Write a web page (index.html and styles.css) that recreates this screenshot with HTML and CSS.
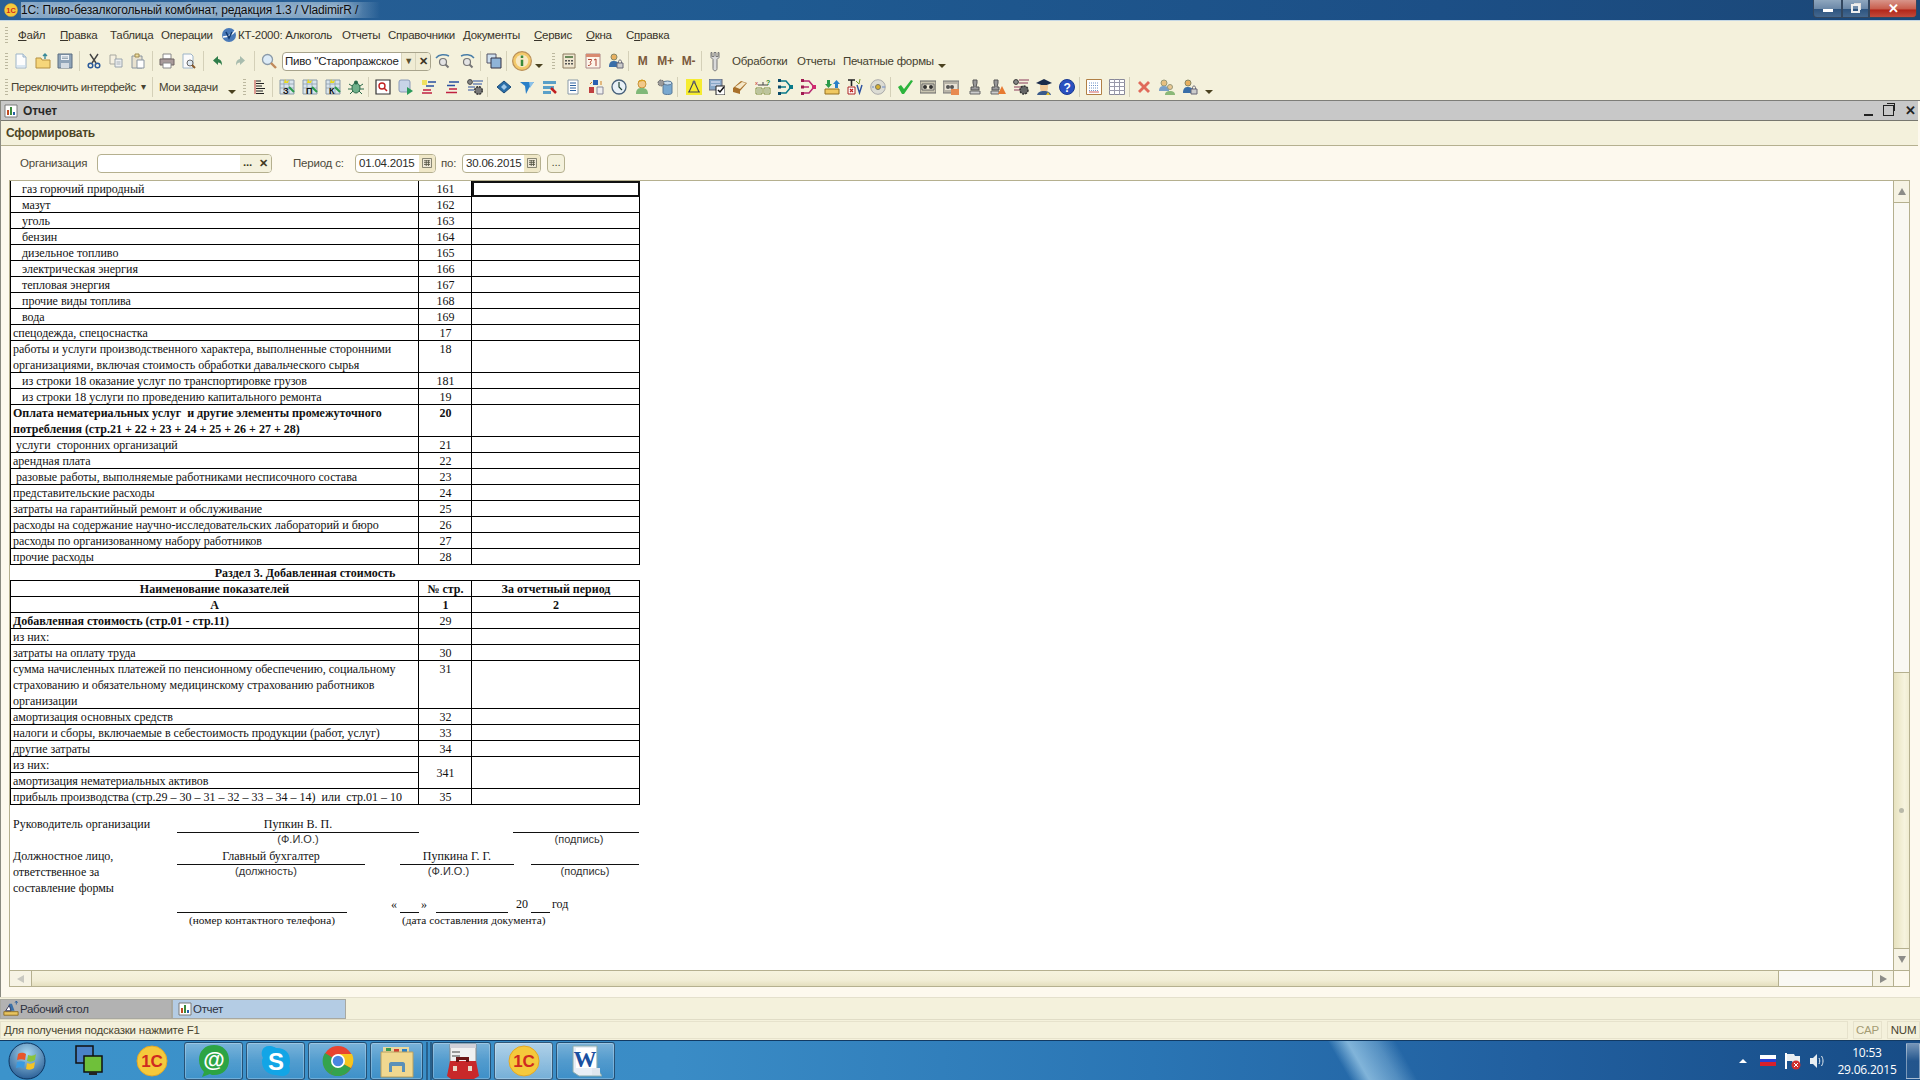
FILE: index.html
```html
<!DOCTYPE html>
<html lang="ru">
<head>
<meta charset="utf-8">
<title>1С</title>
<link rel="stylesheet" href="styles.css">
</head>
<body>
<svg class="defs" xmlns="http://www.w3.org/2000/svg">
<defs>
<symbol id="new" viewBox="0 0 16 16"><path d="M3 1h7l3 3v11H3z" fill="#fdfdfd" stroke="#9db4c8"/><path d="M10 1v3h3" fill="#d6e4ef" stroke="#9db4c8"/><path d="M4 12h8v2H4z" fill="#dbe8f2"/></symbol>
<symbol id="open" viewBox="0 0 16 16"><path d="M1 5h5l1 2h8v8H1z" fill="#f6d67a" stroke="#b59040"/><path d="M10 6V1M8 3l2-2 2 2" fill="none" stroke="#3a8a9a" stroke-width="1.4"/></symbol>
<symbol id="save" viewBox="0 0 16 16"><path d="M1 1h14v14H1z" fill="#8fa4b8" stroke="#5c6f82"/><path d="M4 2h8v5H4z" fill="#eef2f5"/><path d="M4 10h8v5H4z" fill="#d3dbe2"/><path d="M5 4h6M5 5.5h6" stroke="#9aa9b6"/></symbol>
<symbol id="cut" viewBox="0 0 16 16"><path d="M4 1l6 9M12 1L6 10" stroke="#444" stroke-width="1.4"/><circle cx="4.5" cy="12.5" r="2.3" fill="none" stroke="#2a5a9a" stroke-width="1.5"/><circle cx="11.5" cy="12.5" r="2.3" fill="none" stroke="#2a5a9a" stroke-width="1.5"/></symbol>
<symbol id="copy" viewBox="0 0 16 16"><path d="M2 2h6v9H2z" fill="#f5f0e0" stroke="#a8a8a0"/><path d="M7 6h7v8H7z" fill="#eef0f0" stroke="#9aa4ac"/><path d="M8.5 9h4M8.5 11h4" stroke="#a8b0b8"/></symbol>
<symbol id="paste" viewBox="0 0 16 16"><path d="M2 3h10v12H2z" fill="#e8e2d0" stroke="#8a95a0"/><path d="M5 1h4v3H5z" fill="#f0e0a0" stroke="#a08a50"/><path d="M7 7h7v8H7z" fill="#fff" stroke="#8a95a0"/></symbol>
<symbol id="print" viewBox="0 0 16 16"><path d="M4 1h8v5H4z" fill="#fff" stroke="#888"/><path d="M1 6h14v6H1z" fill="#a89a9a" stroke="#6e6464"/><path d="M4 10h8v5H4z" fill="#fff" stroke="#888"/></symbol>
<symbol id="prev" viewBox="0 0 16 16"><path d="M2 1h8l2 2v12H2z" fill="#fbfbfb" stroke="#9db4c8"/><circle cx="9" cy="10" r="3" fill="#dfeaf3" stroke="#666"/><path d="M11 12l3 3" stroke="#8a5a2a" stroke-width="2"/></symbol>
<symbol id="undo" viewBox="0 0 16 16"><path d="M8 3L3 7.5 8 12V9.5c2 0 3 1 4 3 0-4-1-6-4-6.500z" fill="#2f7d4a"/></symbol>
<symbol id="redo" viewBox="0 0 16 16"><path d="M8 3l5 4.500L8 12V9.500c-2 0-3 1-4 3 0-4 1-6 4-6.500z" fill="#a8bcae"/></symbol>
<symbol id="find" viewBox="0 0 16 16"><circle cx="6.500" cy="6.500" r="5" fill="#dcebf7" stroke="#8a9aa8" stroke-width="1.300"/><path d="M10 10l5 5" stroke="#c08a5a" stroke-width="2.400"/></symbol>
<symbol id="lens1" viewBox="0 0 16 16"><path d="M1 5c3-4 9-4 13-2" fill="none" stroke="#4a7ea8" stroke-width="1.400"/><circle cx="8" cy="9" r="3.500" fill="#e4e4e4" stroke="#777" stroke-width="1.200"/><path d="M10.500 11.500l3 3" stroke="#777" stroke-width="2"/></symbol>
<symbol id="lens2" viewBox="0 0 16 16"><path d="M15 5C12 1 6 1 2 3" fill="none" stroke="#4a7ea8" stroke-width="1.400"/><circle cx="8" cy="9" r="3.500" fill="#e4e4e4" stroke="#777" stroke-width="1.200"/><path d="M10.500 11.500l3 3" stroke="#777" stroke-width="2"/></symbol>
<symbol id="wins" viewBox="0 0 16 16"><path d="M1 1h9v9H1z" fill="#cfe0ef" stroke="#556"/><path d="M5 5h10v10H5z" fill="#8fb4d8" stroke="#334"/></symbol>
<symbol id="info" viewBox="0 0 16 16"><circle cx="8" cy="8" r="7.500" fill="#f3c96a" stroke="#b9905a"/><circle cx="8" cy="8" r="5" fill="#f8e9c4"/><path d="M7 7h2v5H7zM7 3.500h2v2H7z" fill="#3a8a3a"/></symbol>
<symbol id="calc" viewBox="0 0 16 16"><path d="M2 1h12v14H2z" fill="#efe6d0" stroke="#8a7a60"/><path d="M4 3h8v2H4z" fill="#6a8a5a"/><path d="M4 7h2v1.500H4zM7 7h2v1.500H7zM10 7h2v1.500h-2zM4 10h2v1.500H4zM7 10h2v1.500H7zM10 10h2v1.500h-2z" fill="#555"/></symbol>
<symbol id="cal" viewBox="0 0 16 16"><path d="M1 1h14v14H1z" fill="#fdf5ea" stroke="#a88"/><path d="M1 1h14v3H1z" fill="#d88a70"/><path d="M3 6.500h3.500v1L5 9.500c1.500 0 1.500 3-2 3M9 7l2-1v7" fill="none" stroke="#b04030"/></symbol>
<symbol id="ulock" viewBox="0 0 16 16"><circle cx="6" cy="4" r="3" fill="#e8b060" stroke="#886"/><path d="M1 14c0-5 2-6 5-6s4 1 4 2v4z" fill="#3a6ea8"/><path d="M9 10h6v5H9z" fill="#ccc" stroke="#667"/><path d="M10.500 10V8.500c0-2 3-2 3 0V10" fill="none" stroke="#667"/></symbol>
<symbol id="wrench" viewBox="0 0 16 20"><path d="M4 1v5l2 2v9c0 3 4 3 4 0V8l2-2V1l-1 0v4H9V1H7v4H5V1z" fill="#dadada" stroke="#777"/></symbol>
<symbol id="list" viewBox="0 0 16 16"><path d="M3 1v14" stroke="#c04040"/><path d="M4 2h5M4 4.500h8M4 7h6M4 9.500h9M4 12h7M4 14.500h8" stroke="#222" stroke-width="1.200"/></symbol>
<symbol id="g3" viewBox="0 0 16 16"><path d="M1 1h14v14H1z" fill="#d8e4ec" stroke="#8a9aa8"/><path d="M1 5h14M1 9h14M5 1v14M10 1v14" stroke="#8a9aa8" stroke-width=".7"/><path d="M6 0l1.500 2.500L10 1 9 4H5z" fill="#e8d820"/><path d="M10 8l5 5" stroke="#2a9a4a" stroke-width="2"/><text x="4" y="15" font-size="9" font-weight="700" font-family="Liberation Sans" fill="#111">З</text></symbol>
<symbol id="gp" viewBox="0 0 16 16"><path d="M1 1h14v14H1z" fill="#d8e4ec" stroke="#8a9aa8"/><path d="M1 5h14M1 9h14M5 1v14M10 1v14" stroke="#8a9aa8" stroke-width=".7"/><path d="M6 0l1.500 2.500L10 1 9 4H5z" fill="#e8d820"/><path d="M10 8l5 5" stroke="#2a9a4a" stroke-width="2"/><text x="4" y="15" font-size="9" font-weight="700" font-family="Liberation Sans" fill="#111">П</text></symbol>
<symbol id="gk" viewBox="0 0 16 16"><path d="M1 1h14v14H1z" fill="#d8e4ec" stroke="#8a9aa8"/><path d="M1 5h14M1 9h14M5 1v14M10 1v14" stroke="#8a9aa8" stroke-width=".7"/><path d="M6 0l1.500 2.500L10 1 9 4H5z" fill="#e8d820"/><path d="M10 8l5 5" stroke="#2a9a4a" stroke-width="2"/><text x="4" y="15" font-size="9" font-weight="700" font-family="Liberation Sans" fill="#111">К</text></symbol>
<symbol id="bug" viewBox="0 0 16 16"><ellipse cx="8" cy="9" rx="4" ry="5" fill="#6fb08a" stroke="#2a6a4a"/><circle cx="8" cy="3.500" r="2" fill="#2a6a4a"/><path d="M1 5l3 2M15 5l-3 2M0 10h4M16 10h-4M2 15l3-3M14 15l-3-3" stroke="#2a6a4a"/></symbol>
<symbol id="qbox" viewBox="0 0 16 16"><path d="M1 1h14v14H1z" fill="#fff" stroke="#333" stroke-width="1.200"/><circle cx="7" cy="7" r="3" fill="#fff" stroke="#c02020" stroke-width="1.400"/><path d="M9 9l3 3" stroke="#c02020" stroke-width="1.600"/></symbol>
<symbol id="play" viewBox="0 0 16 16"><rect x="1" y="1" width="11" height="12" rx="2" fill="#c8d4e8" stroke="#8a9ab8"/><path d="M9 8l6 4-6 4z" fill="#2a9a5a"/></symbol>
<symbol id="lines1" viewBox="0 0 16 16"><path d="M1 1h5v5H1z" fill="#f0e060"/><path d="M7 3h8M5 7h8" stroke="#2a50a0" stroke-width="1.300"/><path d="M2 11h8M1 14h10" stroke="#c02040" stroke-width="1.300"/></symbol>
<symbol id="lines2" viewBox="0 0 16 16"><path d="M5 3h10M3 6.500h8" stroke="#2a50a0" stroke-width="1.300"/><path d="M5 10h8M2 13.500h11" stroke="#c02040" stroke-width="1.300"/></symbol>
<symbol id="gearl" viewBox="0 0 16 16"><circle cx="3" cy="3" r="2.400" fill="#888" stroke="#444"/><path d="M6 2h10M6 5h9M1 8h7M1 11h6" stroke="#2a50a0" stroke-width="1.100"/><circle cx="11.500" cy="11.500" r="3.800" fill="#777" stroke="#333" stroke-width="1.400" stroke-dasharray="2 1"/></symbol>
<symbol id="diam" viewBox="0 0 16 16"><path d="M8 2l7 6-7 6-7-6z" fill="#2a6ea8" stroke="#1a4a78"/><path d="M8 5l3 3-3 3-3-3z" fill="#a0c8e8"/></symbol>
<symbol id="tag" viewBox="0 0 16 16"><path d="M1 3h14l-5 6-3 6-1-8z" fill="#2a80c8"/><path d="M10 3h5l-4 6z" fill="#8ac0e8"/></symbol>
<symbol id="pen" viewBox="0 0 16 16"><path d="M1 2h13v3H1zM1 7h11v3H1zM1 12h8v3H1z" fill="#5aa0c8"/><path d="M9 9l5 5" stroke="#c02020" stroke-width="2.500"/></symbol>
<symbol id="doc" viewBox="0 0 16 16"><path d="M3 1h10v14H3z" fill="#fff" stroke="#8a9aa8"/><path d="M5 4h6M5 6.500h6M5 9h6M5 11.500h6" stroke="#2a60a0"/></symbol>
<symbol id="org" viewBox="0 0 16 16"><path d="M5 1h5v5H5z" fill="#2a60b0"/><path d="M1 8h5v6H1z" fill="#c04040"/><path d="M9 8h6v7H9z" fill="#eee" stroke="#889"/><path d="M2 5l2-2M13 2v4" stroke="#d08020"/></symbol>
<symbol id="clock" viewBox="0 0 16 16"><circle cx="8" cy="8" r="7" fill="#e8f0f6" stroke="#47607a" stroke-width="1.300"/><path d="M8 3v5l3 3" fill="none" stroke="#243" stroke-width="1.200"/></symbol>
<symbol id="pers" viewBox="0 0 16 16"><circle cx="8" cy="5" r="4" fill="#f2c88a" stroke="#c8943a"/><path d="M4 3c1-3 7-3 8 0L9 2z" fill="#d8a020"/><path d="M2 15c0-5 2-6 6-6s6 2 6 6z" fill="#80b878"/></symbol>
<symbol id="db" viewBox="0 0 16 16"><path d="M6 4v10c0 2 9 2 9 0V4z" fill="#78a8d0" stroke="#5a7a98"/><ellipse cx="10.500" cy="4" rx="4.500" ry="2" fill="#c8dcec" stroke="#5a7a98"/><circle cx="4" cy="4" r="3" fill="#999" stroke="#666" stroke-dasharray="2 1"/></symbol>
<symbol id="comp" viewBox="0 0 16 16"><path d="M0 0h16v16H0z" fill="#f6ec30"/><path d="M8 2L3 13M8 2l5 11M2 13h12" fill="none" stroke="#445" stroke-width="1.100"/><circle cx="8" cy="3" r="1.500" fill="#667"/></symbol>
<symbol id="fchk" viewBox="0 0 16 16"><path d="M0 0h13v11H0z" fill="#88a8c8" stroke="#667"/><path d="M2 3h9M2 6h9" stroke="#eef"/><path d="M7 7h9v9H7z" fill="#fff" stroke="#222"/><path d="M9 11l2 2 4-5" fill="none" stroke="#111" stroke-width="1.500"/></symbol>
<symbol id="book" viewBox="0 0 16 16"><path d="M1 9l8-7 6 2-7 8v3L1 13z" fill="#a8702a"/><path d="M3 8l7-5 4 1-6 6z" fill="#f4e8c8"/></symbol>
<symbol id="tree" viewBox="0 0 16 16"><path d="M3 6h10M8 3v3" stroke="#444"/><path d="M1 9h6v6H1zM9 9h6v6H9z" fill="#fff" stroke="#7a8a3a"/><path d="M2 11h4M2 13h4M10 11h4M10 13h4" stroke="#7a8a3a"/><text x="0" y="6" font-size="6" font-family="Liberation Sans" fill="#c02020">x</text><text x="11" y="6" font-size="7" font-weight="700" font-family="Liberation Sans" fill="#2a8a2a">?</text></symbol>
<symbol id="flowt" viewBox="0 0 16 16"><path d="M1 2h7l5 6-5 6H1" fill="none" stroke="#087a8a" stroke-width="1.500"/><path d="M1 8h7" stroke="#087a8a" stroke-width="1.500"/><path d="M11 6h4v4h-4z" fill="#087a8a"/><path d="M0 0h3v3H0zM0 6.500h3v3H0zM0 13h3v3H0z" fill="#0a4a6a"/></symbol>
<symbol id="flowp" viewBox="0 0 16 16"><path d="M1 2h7l5 6-5 6H1" fill="none" stroke="#b82a70" stroke-width="1.500"/><path d="M1 8h7" stroke="#b82a70" stroke-width="1.500"/><path d="M11 6h4v4h-4z" fill="#d02a70"/><path d="M0 0h3v3H0zM0 6.500h3v3H0zM0 13h3v3H0z" fill="#a01a50"/></symbol>
<symbol id="dl" viewBox="0 0 16 16"><path d="M1 10h14v5H1z" fill="#f0c860" stroke="#947020"/><path d="M3 1h3v4h2L4.500 9 1 5h2z" fill="#2a9a4a"/><path d="M11 9V5H9l3.500-4L16 5h-2v4z" fill="#2a80c8"/></symbol>
<symbol id="txv" viewBox="0 0 16 16"><path d="M1 1h7M4.500 1v6" stroke="#222" stroke-width="1.600"/><path d="M1 8h7v7H1z" fill="#fff" stroke="#a22"/><path d="M3 10l3 3M6 10l-3 3" stroke="#c02020" stroke-width="1.200"/><path d="M10 6l2.500 8L15 6" fill="none" stroke="#2a50a0" stroke-width="1.400"/><path d="M9 2l3 3 1-5" fill="none" stroke="#7a9a2a"/></symbol>
<symbol id="disk" viewBox="0 0 16 16"><circle cx="8" cy="8" r="7.300" fill="#dcdcd4" stroke="#aaa"/><circle cx="8" cy="8" r="2.500" fill="#d8b030" stroke="#776"/><path d="M2 8h2M12 8h3" stroke="#6a8ac8"/></symbol>
<symbol id="chk" viewBox="0 0 16 16"><path d="M1 8l3-2 3 4 7-9 2 1-9 13h-2z" fill="#2cb43c"/></symbol>
<symbol id="tape" viewBox="0 0 16 16"><path d="M0 2h16v12H0z" fill="#c8c4b0" stroke="#666"/><path d="M2 5h12v6H2z" fill="#efe9d6" stroke="#666"/><circle cx="5" cy="8" r="2" fill="#333"/><circle cx="11" cy="8" r="2" fill="#333"/></symbol>
<symbol id="tape2" viewBox="0 0 16 16"><path d="M0 2h16v12H0z" fill="#b8b4a8" stroke="#777"/><path d="M2 5h12v6H2z" fill="#e8e2d6"/><circle cx="5" cy="8" r="2" fill="#555"/><circle cx="9" cy="8" r="2" fill="#555"/><path d="M8 10h8v6H8z" fill="#e88a50"/></symbol>
<symbol id="stamp" viewBox="0 0 16 16"><path d="M6 1h4v3L9 8h3v3H4V8h3L6 4z" fill="#9a9a9a" stroke="#555"/><path d="M3 12h10v3H3z" fill="#ccc" stroke="#666"/></symbol>
<symbol id="stamp2" viewBox="0 0 16 16"><path d="M4 1h4v3L7 8h2v3H2V8h3L4 4z" fill="#9a9a9a" stroke="#555"/><path d="M1 12h8v3H1z" fill="#ccc" stroke="#666"/><path d="M12 7l4 8H8z" fill="#e87a30"/></symbol>
<symbol id="gears" viewBox="0 0 16 16"><circle cx="3" cy="3" r="2.400" fill="#888" stroke="#333"/><path d="M6 1h10M6 4h9M1 8h8M1 11h6" stroke="#8a3a5a" stroke-width="1.100"/><circle cx="11" cy="11" r="4" fill="#666" stroke="#333" stroke-width="1.500" stroke-dasharray="2 1"/></symbol>
<symbol id="schol" viewBox="0 0 16 16"><path d="M0 4l8-4 8 4-8 3z" fill="#1a2a4a"/><path d="M4 6h8v3c0 3-2 4-4 4s-4-1-4-4z" fill="#f0c898"/><path d="M1 16c1-3 3-4 7-4s6 1 7 4z" fill="#3a5a8a"/><path d="M12 13l2 3h-4z" fill="#e8c020"/></symbol>
<symbol id="help" viewBox="0 0 16 16"><circle cx="8" cy="8" r="7.500" fill="#2a50c0" stroke="#1a3a90"/><text x="8" y="12.500" text-anchor="middle" font-size="12" font-weight="700" font-family="Liberation Sans" fill="#fff">?</text></symbol>
<symbol id="grid" viewBox="0 0 16 16"><path d="M.5.500h15v15H.5z" fill="#fff" stroke="#b07f45"/><path d="M3 4h10M3 6.500h10M3 9h10M3 11.500h10" stroke="#6f94c8" stroke-dasharray="1 1"/><path d="M3 13h10" stroke="#d06060"/></symbol>
<symbol id="table" viewBox="0 0 16 16"><path d="M.5.500h15v15H.5z" fill="#fff" stroke="#889"/><path d="M0 3.500h16M0 7.500h16M0 11.500h16M5.500 0v16M10.500 0v16" stroke="#99a"/></symbol>
<symbol id="redx" viewBox="0 0 16 16"><path d="M2 4l2-2 4 4 4-4 2 2-4 4 4 4-2 2-4-4-4 4-2-2 4-4z" fill="#e06a5a"/></symbol>
<symbol id="users" viewBox="0 0 16 16"><circle cx="5" cy="4" r="3" fill="#e8c080" stroke="#997"/><path d="M0 12c0-4 2-5 5-5s4 1 5 3v2z" fill="#7aa0c8"/><circle cx="11" cy="8" r="2.500" fill="#eac894" stroke="#997"/><path d="M6 16c0-3 2-4 5-4s5 1 5 4z" fill="#8ab878"/></symbol>
<symbol id="ucal" viewBox="0 0 16 16"><path d="M2 2h12v12H2z" fill="#eee8d8" stroke="#665"/><path d="M4 5h8M4 7.500h8M4 10h8M7 4v8M10 4v8" stroke="#554" stroke-width="1.100"/></symbol>
<symbol id="rep" viewBox="0 0 14 14"><path d="M1 1h12v12H1z" fill="#fff" stroke="#7a7a7a"/><path d="M3 6h2v5H3z" fill="#c04a20"/><path d="M6 3h2v8H6z" fill="#3a8a3a"/><path d="M9 8h2v3H9z" fill="#2a60a8"/></symbol>
<symbol id="desk" viewBox="0 0 18 18"><path d="M1 12h16v4H1z" fill="#e8c460" stroke="#8a6a20"/><path d="M4 11l3-8h3l3 8z" fill="#3a70a8"/><path d="M7 5l-4 6h6z" fill="#fff" stroke="#335"/><path d="M15 0v4M13.500 2l1.500-2 1.500 2" fill="none" stroke="#2a60a0"/></symbol>
<symbol id="ks" viewBox="0 0 16 16"><circle cx="8" cy="8" r="7" fill="#4a7ab8"/><path d="M2 10c4 0 9-2 13-7" stroke="#fff" stroke-width="1.500" fill="none"/><path d="M5 5l3 6 3-6" fill="none" stroke="#123a70" stroke-width="1.600"/></symbol>
<symbol id="oneC" viewBox="0 0 32 32"><circle cx="16" cy="16" r="15" fill="#f5c93c" stroke="#e3a725"/><text x="16" y="22" text-anchor="middle" font-size="17" font-weight="700" font-family="Liberation Sans" fill="#cf2a20">1С</text></symbol>
</defs>
</svg>

<header class="title">
  <svg class="ico14"><use href="#oneC"/></svg>
  <span class="title-text">1С: Пиво-безалкогольный комбинат, редакция 1.3 / VladimirR /</span>
  <div class="winbtns">
    <span class="wb wb-min"><i></i></span>
    <span class="wb wb-max"><i></i></span>
    <span class="wb wb-close">✕</span>
  </div>
</header>

<nav class="menu">
  <span class="grip"></span>
  <span class="mi w42"><u>Ф</u>айл</span>
  <span class="mi w50"><u>П</u>равка</span>
  <span class="mi w51">Таблица</span>
  <span class="mi w60">Операции</span>
  <svg class="ico16 mi-ic"><use href="#ks"/></svg>
  <span class="mi w104">КТ-2000: Алкоголь</span>
  <span class="mi w46">Отчеты</span>
  <span class="mi w75">Справочники</span>
  <span class="mi w71">Документы</span>
  <span class="mi w52"><u>С</u>ервис</span>
  <span class="mi w40"><u>О</u>кна</span>
  <span class="mi">С<u>п</u>равка</span>
</nav>

<div class="tb tb1">
  <span class="grip"></span>
  <span class="ic"><svg class="ico16"><use href="#new"/></svg></span>
  <span class="ic"><svg class="ico16"><use href="#open"/></svg></span>
  <span class="ic"><svg class="ico16"><use href="#save"/></svg></span>
  <span class="sp7"></span>
  <span class="ic"><svg class="ico16"><use href="#cut"/></svg></span>
  <span class="ic"><svg class="ico16"><use href="#copy"/></svg></span>
  <span class="ic"><svg class="ico16"><use href="#paste"/></svg></span>
  <span class="sp7"></span>
  <span class="ic"><svg class="ico16"><use href="#print"/></svg></span>
  <span class="ic"><svg class="ico16"><use href="#prev"/></svg></span>
  <span class="sp7"></span>
  <span class="ic"><svg class="ico16"><use href="#undo"/></svg></span>
  <span class="ic"><svg class="ico16"><use href="#redo"/></svg></span>
  <span class="sp7"></span>
  <span class="ic"><svg class="ico16"><use href="#find"/></svg></span>
  <span class="combo"><span class="combo-v">Пиво "Старопражское</span><span class="combo-dd">▼</span><span class="combo-x">✕</span></span>
  <span class="ic ic24"><svg class="ico16"><use href="#lens1"/></svg></span>
  <span class="ic ic24"><svg class="ico16"><use href="#lens2"/></svg></span>
  <span class="sp4"></span>
  <span class="ic"><svg class="ico16"><use href="#wins"/></svg></span>
  <span class="sp4"></span>
  <span class="ic ic26"><svg class="ico18"><use href="#info"/></svg></span>
  <span class="drop drop-i"></span>
  <span class="grip grip2"></span>
  <span class="ic ic24"><svg class="ico16"><use href="#calc"/></svg></span>
  <span class="ic ic24"><svg class="ico16"><use href="#cal"/></svg></span>
  <span class="ic"><svg class="ico16"><use href="#ulock"/></svg></span>
  <span class="sp4"></span>
  <span class="mbtn">M</span><span class="mbtn">M+</span><span class="mbtn">M-</span>
  <span class="sp4"></span>
  <span class="ic"><svg class="ico16 tall"><use href="#wrench"/></svg></span>
  <span class="tt t1">Обработки</span>
  <span class="tt t2">Отчеты</span>
  <span class="tt t3">Печатные формы</span>
  <span class="drop drop-p"></span>
</div>

<div class="tb tb2">
  <span class="grip"></span>
  <span class="tt2 w125">Переключить интерфейс</span>
  <span class="dd">▾</span>
  <span class="sp4"></span>
  <span class="tt2 m2 w62">Мои задачи</span>
  <span class="drop drop2"></span>
  <span class="grip grip3"></span>
  <span class="ic ic-list"><svg class="ico16"><use href="#list"/></svg></span>
  <span class="sp4"></span>
  <span class="ic"><svg class="ico16"><use href="#g3"/></svg></span>
  <span class="ic"><svg class="ico16"><use href="#gp"/></svg></span>
  <span class="ic"><svg class="ico16"><use href="#gk"/></svg></span>
  <span class="ic"><svg class="ico16"><use href="#bug"/></svg></span>
  <span class="sp4"></span>
  <span class="ic"><svg class="ico16"><use href="#qbox"/></svg></span>
  <span class="ic"><svg class="ico16"><use href="#play"/></svg></span>
  <span class="ic"><svg class="ico16"><use href="#lines1"/></svg></span>
  <span class="ic"><svg class="ico16"><use href="#lines2"/></svg></span>
  <span class="ic"><svg class="ico16"><use href="#gearl"/></svg></span>
  <span class="sp4 sp6"></span>
  <span class="ic"><svg class="ico16"><use href="#diam"/></svg></span>
  <span class="ic"><svg class="ico16"><use href="#tag"/></svg></span>
  <span class="ic"><svg class="ico16"><use href="#pen"/></svg></span>
  <span class="ic"><svg class="ico16"><use href="#doc"/></svg></span>
  <span class="ic"><svg class="ico16"><use href="#org"/></svg></span>
  <span class="ic"><svg class="ico16"><use href="#clock"/></svg></span>
  <span class="ic"><svg class="ico16"><use href="#pers"/></svg></span>
  <span class="ic"><svg class="ico16"><use href="#db"/></svg></span>
  <span class="sp4 sp6"></span>
  <span class="ic"><svg class="ico16"><use href="#comp"/></svg></span>
  <span class="ic"><svg class="ico16"><use href="#fchk"/></svg></span>
  <span class="ic"><svg class="ico16"><use href="#book"/></svg></span>
  <span class="ic"><svg class="ico16"><use href="#tree"/></svg></span>
  <span class="ic"><svg class="ico16"><use href="#flowt"/></svg></span>
  <span class="ic"><svg class="ico16"><use href="#flowp"/></svg></span>
  <span class="ic"><svg class="ico16"><use href="#dl"/></svg></span>
  <span class="ic"><svg class="ico16"><use href="#txv"/></svg></span>
  <span class="ic"><svg class="ico16"><use href="#disk"/></svg></span>
  <span class="sp4"></span>
  <span class="ic"><svg class="ico16"><use href="#chk"/></svg></span>
  <span class="ic"><svg class="ico16"><use href="#tape"/></svg></span>
  <span class="ic ic24"><svg class="ico16"><use href="#tape2"/></svg></span>
  <span class="ic"><svg class="ico16"><use href="#stamp"/></svg></span>
  <span class="ic"><svg class="ico16"><use href="#stamp2"/></svg></span>
  <span class="ic"><svg class="ico16"><use href="#gears"/></svg></span>
  <span class="ic"><svg class="ico16"><use href="#schol"/></svg></span>
  <span class="ic"><svg class="ico16"><use href="#help"/></svg></span>
  <span class="sp4"></span>
  <span class="ic"><svg class="ico16"><use href="#grid"/></svg></span>
  <span class="ic"><svg class="ico16"><use href="#table"/></svg></span>
  <span class="sp4"></span>
  <span class="ic"><svg class="ico16"><use href="#redx"/></svg></span>
  <span class="ic"><svg class="ico16"><use href="#users"/></svg></span>
  <span class="ic"><svg class="ico16"><use href="#ulock"/></svg></span>
  <span class="drop drop3"></span>
</div>

<main class="wnd">
  <div class="wtitle">
    <svg class="ico14 rep"><use href="#rep"/></svg>
    <b class="wname">Отчет</b>
    <span class="wctl">
      <span class="c-min"></span>
      <span class="c-max"><i></i></span>
      <span class="c-x">✕</span>
    </span>
  </div>
  <div class="cmd"><b>Сформировать</b></div>
  <form class="filter">
    <span class="lbl l-org">Организация</span>
    <span class="field f-org"><span class="f-fill"></span><span class="f-b f-dots">...</span><span class="f-b f-x">✕</span></span>
    <span class="lbl l-per">Период с:</span>
    <span class="field f-date"><span class="f-fill">01.04.2015</span><span class="f-cal"><svg class="ico12"><use href="#ucal"/></svg></span></span>
    <span class="lbl l-po">по:</span>
    <span class="field f-date f-d2"><span class="f-fill">30.06.2015</span><span class="f-cal"><svg class="ico12"><use href="#ucal"/></svg></span></span>
    <span class="dots-btn">...</span>
  </form>

  <section class="frame">
    <div class="sheet">
      <table class="rep-t">
        <colgroup><col class="c1"><col class="c2"><col class="c3"></colgroup>
        <tr><td class="in">газ горючий природный</td><td class="n">161</td><td class="sel"></td></tr>
        <tr><td class="in">мазут</td><td class="n">162</td><td></td></tr>
        <tr><td class="in">уголь</td><td class="n">163</td><td></td></tr>
        <tr><td class="in">бензин</td><td class="n">164</td><td></td></tr>
        <tr><td class="in">дизельное топливо</td><td class="n">165</td><td></td></tr>
        <tr><td class="in">электрическая энергия</td><td class="n">166</td><td></td></tr>
        <tr><td class="in">тепловая энергия</td><td class="n">167</td><td></td></tr>
        <tr><td class="in">прочие виды топлива</td><td class="n">168</td><td></td></tr>
        <tr><td class="in">вода</td><td class="n">169</td><td></td></tr>
        <tr><td>спецодежда, спецоснастка</td><td class="n">17</td><td></td></tr>
        <tr><td>работы и услуги производственного характера, выполненные сторонними<br>организациями, включая стоимость обработки давальческого сырья</td><td class="n">18</td><td></td></tr>
        <tr><td class="in">из строки 18 оказание услуг по транспортировке грузов</td><td class="n">181</td><td></td></tr>
        <tr><td class="in">из строки 18 услуги по проведению капитального ремонта</td><td class="n">19</td><td></td></tr>
        <tr><td class="b">Оплата нематериальных услуг&nbsp; и другие элементы промежуточного<br>потребления (стр.21 + 22 + 23 + 24 + 25 + 26 + 27 + 28)</td><td class="n b">20</td><td></td></tr>
        <tr><td class="in2">услуги&nbsp; сторонних организаций</td><td class="n">21</td><td></td></tr>
        <tr><td>арендная плата</td><td class="n">22</td><td></td></tr>
        <tr><td class="in2">разовые работы, выполняемые работниками несписочного состава</td><td class="n">23</td><td></td></tr>
        <tr><td>представительские расходы</td><td class="n">24</td><td></td></tr>
        <tr><td>затраты на гарантийный ремонт и обслуживание</td><td class="n">25</td><td></td></tr>
        <tr><td>расходы на содержание научно-исследовательских лабораторий и бюро</td><td class="n">26</td><td></td></tr>
        <tr><td>расходы по организованному набору работников</td><td class="n">27</td><td></td></tr>
        <tr><td>прочие расходы</td><td class="n">28</td><td></td></tr>
        <tr class="sec"><td colspan="3" class="b ctr">Раздел 3. Добавленная стоимость</td></tr>
        <tr class="hd"><td>Наименование показателей</td><td>№ стр.</td><td>За отчетный период</td></tr>
        <tr class="hd"><td>А</td><td>1</td><td>2</td></tr>
        <tr><td class="b">Добавленная стоимость (стр.01 - стр.11)</td><td class="n">29</td><td></td></tr>
        <tr><td>из них:</td><td class="n"></td><td></td></tr>
        <tr><td>затраты на оплату труда</td><td class="n">30</td><td></td></tr>
        <tr><td>сумма начисленных платежей по пенсионному обеспечению, социальному<br>страхованию и обязательному медицинскому страхованию работников<br>организации</td><td class="n">31</td><td></td></tr>
        <tr><td>амортизация основных средств</td><td class="n">32</td><td></td></tr>
        <tr><td>налоги и сборы, включаемые в себестоимость продукции (работ, услуг)</td><td class="n">33</td><td></td></tr>
        <tr><td>другие затраты</td><td class="n">34</td><td></td></tr>
        <tr><td>из них:</td><td class="n mid" rowspan="2">341</td><td rowspan="2"></td></tr>
        <tr><td>амортизация нематериальных активов</td></tr>
        <tr><td>прибыль производства (стр.29 – 30 – 31 – 32 – 33 – 34 – 14)&nbsp; или&nbsp; стр.01 – 10</td><td class="n">35</td><td></td></tr>
      </table>
      <div class="sign">
        <div class="sr"><span class="s-l">Руководитель организации</span><span class="s-u w242">Пупкин В. П.</span><span class="s-g94"></span><span class="s-u w126"></span></div>
        <div class="sr sans"><span class="s-l"></span><span class="s-c w242">(Ф.И.О.)</span><span class="s-g94"></span><span class="s-c w126 pl6">(подпись)</span></div>
        <div class="sr"><span class="s-l">Должностное лицо,</span><span class="s-u w188">Главный бухгалтер</span><span class="s-g35"></span><span class="s-u w114">Пупкина Г. Г.</span><span class="s-g17"></span><span class="s-u w108"></span></div>
        <div class="sr sans"><span class="s-l serif">ответственное за</span><span class="s-c w188 pr10">(должность)</span><span class="s-g35"></span><span class="s-c w114 pr17">(Ф.И.О.)</span><span class="s-g17"></span><span class="s-c w108">(подпись)</span></div>
        <div class="sr"><span class="s-l">составление формы</span></div>
        <div class="sr"><span class="s-l"></span><span class="s-u w170"></span><span class="s-g44"></span><span class="s-q">«</span><span class="s-u w19"></span><span class="s-q2">»</span><span class="s-u w72"></span><span class="s-20">20</span><span class="s-u w19"></span><span class="s-g">год</span></div>
        <div class="sr small"><span class="s-l"></span><span class="s-c w170">(номер контактного телефона)</span><span class="s-g30"></span><span class="s-c w140">(дата составления документа)</span></div>
      </div>
    </div>
    <div class="vs">
      <span class="sb-btn"><i class="tri-up"></i></span>
      <span class="vs-track"></span>
      <span class="vs-thumb"><i></i></span>
      <span class="sb-btn sb-dn"><i class="tri-dn"></i></span>
    </div>
    <div class="hs">
      <span class="hb"><i class="tri-l"></i></span>
      <span class="hs-thumb"></span>
      <span class="hs-track"></span>
      <span class="hb hb-r"><i class="tri-r"></i></span>
    </div>
    <div class="corner"></div>
  </section>
</main>

<div class="tabs">
  <span class="tab tab-desk"><svg class="ico16"><use href="#desk"/></svg>Рабочий стол</span>
  <span class="tab tab-rep"><svg class="ico14"><use href="#rep"/></svg>Отчет</span>
</div>

<div class="status">
  <span class="st-main">Для получения подсказки нажмите F1</span>
  <span class="st-cap">CAP</span>
  <span class="st-num">NUM</span>
</div>

<footer class="taskbar">
  <span class="orb">
    <svg width="38" height="38" viewBox="0 0 38 38"><defs><radialGradient id="og" cx=".5" cy=".3" r=".8"><stop offset="0" stop-color="#a8d8f0"/><stop offset="1" stop-color="#1a4f8a"/></radialGradient></defs><circle cx="19" cy="19" r="18" fill="url(#og)" stroke="#0d3560"/><path d="M10 12c3-2 6-1 8 0l-1 6c-3-1-5-1-8 0z" fill="#e8562a"/><path d="M20 13c3 1 6 1 8-1l-1 6c-3 2-5 2-8 1z" fill="#8ac43c"/><path d="M9 20c3-1 5-1 8 0l-1 6c-3-1-5-1-8 0z" fill="#3a9ae0"/><path d="M19 21c3 1 5 1 8-1l-1 6c-3 2-5 2-8 1z" fill="#f5c325"/></svg>
  </span>
  <span class="tk tk-plain tk-mon">
    <svg width="32" height="34" viewBox="0 0 32 34"><path d="M3 2h17v17H3z" fill="#4a82c8" stroke="#111" stroke-width="1.500"/><path d="M11 12h18v16H11z" fill="#6fc03a" stroke="#111" stroke-width="1.500"/><path d="M16 28h8v3h-8z" fill="#222"/></svg>
  </span>
  <span class="tk tk-plain tk-c"><svg class="ico32"><use href="#oneC"/></svg></span>
  <span class="tk tk-btn">
    <svg width="32" height="34" viewBox="0 0 32 34"><path d="M16 1C7 1 1 7 1 16c0 5 2 9 5 12l-2 5 8-3c1 1 3 1 4 1 9 0 15-6 15-15S25 1 16 1z" fill="#2ca444"/><text x="16" y="23" text-anchor="middle" font-size="22" font-weight="700" font-family="Liberation Sans" fill="#fff">@</text></svg>
  </span>
  <span class="tk tk-btn">
    <svg width="32" height="34" viewBox="0 0 32 34"><path d="M9 2c5 0 6 2 8 2 8 0 13 5 13 13 0 2 0 3-1 5 2 3 1 10-7 10-3 0-4-1-6-1-8 0-14-6-14-13 0-1 0-3 1-4C0 9 2 2 9 2z" fill="#12a5e6"/><text x="16" y="26" text-anchor="middle" font-size="24" font-weight="700" font-family="Liberation Sans" fill="#fff">S</text></svg>
  </span>
  <span class="tk tk-btn">
    <svg width="32" height="32" viewBox="0 0 32 32"><circle cx="16" cy="16" r="15" fill="#e8432f"/><path d="M16 16L29 23A15 15 0 0 1 8 29z" fill="#34a34d"/><path d="M16 16l13 7a15 15 0 0 0 1-14H16z" fill="#f6c51e"/><path d="M16 16L8 29A15 15 0 0 1 3 8z" fill="#34a34d"/><circle cx="16" cy="16" r="7" fill="#fff"/><circle cx="16" cy="16" r="5.300" fill="#4a86e0"/></svg>
  </span>
  <span class="tk tk-btn tk-ex">
    <svg width="34" height="34" viewBox="0 0 34 34"><path d="M3 3h26v8H3z" fill="#e8d8a0"/><path d="M6 4h5v3H6z" fill="#3a9a4a"/><path d="M14 5h5v3h-5z" fill="#d04030"/><path d="M22 5h5v3h-5z" fill="#2a80c8"/><path d="M1 8h32v25H1z" fill="#f0d890" stroke="#b8a060"/><path d="M9 28v-8c0-1 1-2 2-2h12c1 0 2 1 2 2v8h-3v-6H12v6z" fill="#5a90b8"/></svg>
  </span>
  <span class="tk-sep"></span>
  <span class="tk tk-btn">
    <svg width="34" height="36" viewBox="0 0 34 36"><path d="M5 1h26v22H5z" fill="#f0f0f0" stroke="#888"/><path d="M5 1h26v4H5z" fill="#d0d0d8"/><path d="M7 8h8v2H7zM7 12h8v2H7z" fill="#999"/><path d="M5 18h26l3 15-5 3H6l-4-3z" fill="#c8282a"/><path d="M11 14h13v5h-3v-2h-7v2h-3z" fill="#6a1414"/><path d="M8 23h4v5H8zM23 23h4v5h-4z" fill="#e8d8c8"/></svg>
  </span>
  <span class="tk tk-btn tk-lit"><svg class="ico32"><use href="#oneC"/></svg></span>
  <span class="tk tk-btn">
    <svg width="32" height="34" viewBox="0 0 32 34"><path d="M3 2h24v22l5 8H9l-6-4z" fill="#e8eef6" stroke="#8aa"/><path d="M6 24V4h20v20z" fill="#fff"/><text x="15" y="23" text-anchor="middle" font-size="23" font-weight="700" font-family="Liberation Serif" fill="#1a4fa0">W</text><path d="M22 24h8v7h-8z" fill="#dfe6ee"/></svg>
  </span>
  <span class="tray">
    <span class="tr-up"></span>
    <span class="flag"><i></i><i></i><i></i></span>
    <svg class="tr-ic" width="16" height="18" viewBox="0 0 16 18"><path d="M1 1v16" stroke="#fff" stroke-width="2"/><path d="M2 2h7l1 2h5v7H8l-1-2H2z" fill="#e8eef2"/><circle cx="11" cy="13" r="4.500" fill="#d03030"/><path d="M9 11l4 4M13 11l-4 4" stroke="#fff"/></svg>
    <svg class="tr-ic2" width="16" height="16" viewBox="0 0 16 16"><path d="M1 5h3l4-4v14l-4-4H1z" fill="#e8eef2"/><path d="M10 5c1 2 1 4 0 6M12.500 3c2 3 2 7 0 10" fill="none" stroke="#e8eef2"/></svg>
    <span class="clock"><span>10:53</span><span>29.06.2015</span></span>
    <span class="showd"></span>
  </span>
</footer>
</body>
</html>
```
FILE: styles.css
```css
* { box-sizing: border-box; }
html, body { margin: 0; padding: 0; }
body {
  width: 1920px; height: 1080px; overflow: hidden;
  display: flex; flex-direction: column;
  font: 12px "Liberation Sans", Arial, sans-serif;
  color: #3f3b2c; background: #f4f1dc;
}
.defs { position: absolute; width: 0; height: 0; }
svg { display: block; flex: none; }
.ico12 { width: 12px; height: 12px; }
.ico14 { width: 14px; height: 14px; }
.ico16 { width: 16px; height: 16px; }
.ico18 { width: 20px; height: 20px; }
.ico32 { width: 32px; height: 32px; }
.tall { height: 21px; }

/* title */
.title {
  height: 21px; flex: none; display: flex; align-items: center; padding-left: 4px;
  background: linear-gradient(90deg, #2a6096 0, #1f5a91 40%, #1c4f86 75%, #1b4777 100%);
  border-bottom: 1px solid #c3d6e4;
}
.title-text {
  margin-left: 3px; padding: 1px 22px 1px 0; color: #0c0c0c; letter-spacing: -.15px;
  background: linear-gradient(90deg, rgba(205,222,235,.55) 88%, rgba(205,222,235,0));
  text-shadow: 0 0 5px rgba(255,255,255,.8);
}
.winbtns { margin-left: auto; margin-right: 3px; display: flex; height: 18px; align-self: flex-start; }
.wb {
  display: flex; align-items: center; justify-content: center; color: #fff;
  border: 1px solid #33475f; border-top: 0;
  background: linear-gradient(#8ea6be, #6c89a8 50%, #2e5580 55%, #44688f);
}
.wb-min { width: 29px; border-radius: 0 0 0 4px; }
.wb-min i { width: 10px; height: 3px; background: #fff; margin-top: 4px; }
.wb-max { width: 27px; }
.wb-max i { width: 9px; height: 9px; border: 2px solid #eee; box-shadow: 2px -2px 0 -1px #ddd; }
.wb-close { width: 48px; border-radius: 0 0 4px 0; font-size: 13px; font-weight: 700; background: linear-gradient(#d8958a, #c9604f 50%, #b3271a 60%, #c24b3c); }

/* menu */
.menu { height: 26px; flex: none; display: flex; align-items: center; padding: 2px 0 0 5px; color: #38342a; font-size: 11.500px; letter-spacing: -.25px; }
.grip { width: 3px; height: 16px; flex: none; background: repeating-linear-gradient(#bcb89f 0 1px, transparent 1px 3px); }
.menu .grip { margin-right: 10px; }
.mi { flex: none; }
.mi-ic { margin-right: 1px; }
.w42 { width: 42px; } .w50 { width: 50px; } .w51 { width: 51px; } .w60 { width: 60px; }
.w104 { width: 104px; } .w46 { width: 46px; } .w75 { width: 75px; } .w71 { width: 71px; }
.w52 { width: 52px; } .w40 { width: 40px; } .w125 { width: 125px; } .w62 { width: 62px; }

/* toolbars */
.tb { flex: none; display: flex; align-items: center; padding-left: 5px; color: #45412f; font-size: 11.500px; letter-spacing: -.25px; }
.tb1 { height: 26px; padding-top: 2px; }
.tb2 { height: 28px; padding-top: 0; border-bottom: 1px solid #7d7d78; }
.tb1 .grip { margin-right: 2px; }
.tb .ic { flex: none; width: 22px; height: 22px; display: flex; align-items: center; justify-content: center; }
.tb2 .ic { width: 23px; }
.tb .ic24 { width: 24px; }
.tb .ic26 { width: 26px; }
.sp7 { width: 7px; height: 20px; flex: none; background: linear-gradient(90deg, transparent 3px, #d4d0b8 3px, #d4d0b8 4px, transparent 4px); }
.sp4 { width: 4px; height: 20px; flex: none; background: linear-gradient(90deg, transparent 1px, #d4d0b8 1px, #d4d0b8 2px, transparent 2px); }
.sp6 { width: 6px; }
.combo {
  flex: none; width: 149px; height: 19px; margin-left: 2px; display: flex;
  border: 1px solid #a8a48c; border-radius: 4px; background: #fff; color: #222; overflow: hidden; letter-spacing: -.2px;
}
.combo-v { flex: 1; padding-left: 2px; line-height: 17px; white-space: nowrap; overflow: hidden; }
.combo-dd, .combo-x { flex: none; width: 14px; background: #f0ecd4; text-align: center; line-height: 17px; font-size: 9px; border-left: 1px solid #d8d4bc; color: #5a5030; }
.combo-x { width: 15px; font-size: 11px; font-weight: 700; color: #3a3525; }
.drop { flex: none; width: 0; height: 0; margin: 10px 4px 0 5px; border: 4px solid transparent; border-bottom: 0; border-top-color: #4a4220; }
.drop-i { margin-left: 0; }
.drop-p { margin-left: 3px; }
.tb .grip2 { margin-left: 5px; margin-right: 2px; }
.mbtn { flex: none; font-weight: 700; color: #7b5a3c; width: 23px; text-align: center; font-size: 12px; }
.tt { flex: none; white-space: nowrap; }
.t1 { margin-left: 6px; width: 65px; } .t2 { width: 46px; } .t3 { width: 92px; }
.tt2 { flex: none; white-space: nowrap; letter-spacing: -.4px; }
.tb2 > .grip:first-child { margin-right: 3px; }
.dd { flex: none; width: 15px; text-align: center; font-size: 10px; }
.m2 { margin-left: 4px; }
.drop2 { margin-left: 7px; margin-right: 7px; }
.grip3 { margin-right: 2px; }
.drop3 { margin-left: 4px; }

/* inner window */
.wnd { flex: none; height: 896px; display: flex; flex-direction: column; border-left: 1px solid #8a8a80; background: #fdf9ee; }
.wtitle { height: 20px; flex: none; display: flex; align-items: center; padding-left: 3px; background: #c8c8c8; border-bottom: 1px solid #77776f; color: #2a2a28; margin-right: 2px; }
.wname { margin-left: 5px; font-size: 12px; letter-spacing: -.1px; }
.wctl { margin-left: auto; display: flex; align-items: center; margin-right: 1px; }
.c-min { width: 9px; height: 2px; background: #222; margin-top: 8px; margin-right: 10px; }
.c-max { width: 11px; height: 11px; border: 1px solid #222; margin-right: 11px; position: relative; background: #c8c8c8; }
.c-max i { display: block; width: 8px; height: 8px; border: 1px solid #222; border-left: 0; border-bottom: 0; position: relative; left: 3px; top: -3px; }
.c-x { font-size: 13px; font-weight: 700; color: #222; width: 12px; }
.cmd { height: 25px; flex: none; display: flex; align-items: center; padding-left: 5px; background: #f4f1dc; border-bottom: 1px solid #b5b08f; color: #4c4526; margin-right: 2px; letter-spacing: -.2px; }
.filter { height: 34px; flex: none; display: flex; align-items: center; margin: 0; color: #4d4a3a; font-size: 11.500px; letter-spacing: -.2px; }
.lbl { flex: none; white-space: nowrap; }
.l-org { margin-left: 19px; width: 77px; }
.field { flex: none; height: 19px; display: flex; border: 1px solid #b5b08f; border-radius: 4px; background: #fff; overflow: hidden; color: #2b2b26; }
.f-org { width: 175px; }
.f-fill { flex: 1; padding-left: 3px; line-height: 17px; }
.f-b { width: 15px; background: #f4f1dc; text-align: center; line-height: 15px; font-weight: 700; color: #40391f; }
.f-x { width: 16px; font-size: 11px; line-height: 17px; }
.l-per { margin-left: 21px; width: 62px; }
.f-date { width: 81px; }
.f-d2 { width: 79px; }
.f-cal { width: 16px; background: #f0e8c8; display: flex; align-items: center; justify-content: center; }
.l-po { margin-left: 5px; width: 21px; }
.dots-btn { flex: none; width: 18px; height: 19px; margin-left: 6px; border: 1px solid #b5b08f; border-radius: 4px; background: #f4f1dc; text-align: center; line-height: 15px; }

/* report frame */
.frame {
  flex: none; width: 1901px; height: 807px; margin-left: 8px;
  display: grid; grid-template-columns: 1fr 16px; grid-template-rows: 1fr 16px;
  border: 1px solid #b5b08f; background: #fff;
}
.sheet { overflow: hidden; font: 12px "Liberation Serif", "Times New Roman", serif; color: #111; min-height: 0; }
.rep-t { border-collapse: separate; border-spacing: 0; table-layout: fixed; width: 630px; }
.c1 { width: 409px; } .c2 { width: 53px; } .c3 { width: 168px; }
.rep-t td { padding: 0 0 0 3px; line-height: 16px; vertical-align: top; box-shadow: inset -1px -1px 0 #000; white-space: nowrap; height: 16px; }
.rep-t td:first-child { box-shadow: inset -1px -1px 0 #000, inset 1px 0 0 #000; }
.rep-t .in { padding-left: 12px; }
.rep-t .in2 { padding-left: 6px; }
.rep-t .n { text-align: center; padding-left: 0; }
.rep-t .mid { vertical-align: middle; }
.rep-t .b { font-weight: 700; }
.rep-t .sec td { box-shadow: inset 0 -1px 0 #000; text-align: center; padding: 0 40px 0 0; }
.rep-t .hd td { text-align: center; font-weight: 700; padding-left: 0; }
.rep-t .sel { box-shadow: inset 0 0 0 2px #111, inset -1px -1px 0 #000; }

.sign { width: 630px; padding-top: 12px; }
.sr { height: 16px; display: flex; line-height: 15px; padding-left: 3px; white-space: nowrap; }
.sans { font-family: "Liberation Sans", Arial, sans-serif; font-size: 11px; line-height: 13px; color: #333; }
.serif { font-family: "Liberation Serif", serif; font-size: 12px; line-height: 15px; color: #111; }
.small { font-size: 11.300px; }
.s-l { width: 164px; flex: none; }
.s-u { border-bottom: 1px solid #111; text-align: center; flex: none; }
.s-c { text-align: center; flex: none; }
.pl6 { padding-left: 6px; } .pr10 { padding-right: 10px; } .pr17 { padding-right: 17px; }
.w242 { width: 242px; } .w126 { width: 126px; } .w188 { width: 188px; } .w114 { width: 114px; }
.w108 { width: 108px; } .w170 { width: 170px; } .w19 { width: 19px; } .w72 { width: 72px; } .w140 { width: 140px; }
.s-g94 { width: 94px; flex: none; } .s-g35 { width: 35px; flex: none; } .s-g17 { width: 17px; flex: none; }
.s-g44 { width: 44px; flex: none; } .s-g30 { width: 55px; flex: none; }
.s-q { width: 9px; flex: none; } .s-q2 { width: 17px; flex: none; padding-left: 2px; }
.s-20 { width: 23px; flex: none; text-align: right; padding-right: 3px; }
.s-g { flex: none; padding-left: 2px; }

/* scrollbars */
.vs { grid-column: 2; grid-row: 1; display: flex; flex-direction: column; border-left: 1px solid #b5b08f; background: #f9f8f3; min-height: 0; }
.sb-btn { flex: none; height: 22px; display: flex; align-items: center; justify-content: center; background: #f6f3e4; border-bottom: 1px solid #b5b08f; }
.sb-dn { border-bottom: 0; border-top: 1px solid #b5b08f; }
.vs-track { flex: 1; }
.vs-thumb { flex: none; height: 276px; border-top: 1px solid #b5b08f; background: linear-gradient(90deg, #e7e2bf, #f6f3de 70%, #f0ecd2); display: flex; align-items: center; justify-content: center; }
.vs-thumb i { width: 5px; height: 5px; border-radius: 50%; background: #b8b8a8; }
.tri-up, .tri-dn, .tri-l, .tri-r { width: 0; height: 0; border: 4px solid transparent; }
.tri-up { border-top: 0; border-bottom: 7px solid #8c8c88; }
.tri-dn { border-bottom: 0; border-top: 7px solid #8c8c88; }
.tri-l { border-left: 0; border-right: 7px solid #c8c8c0; }
.tri-r { border-right: 0; border-left: 7px solid #8c8c88; }
.hs { grid-column: 1; grid-row: 2; display: flex; border-top: 1px solid #b5b08f; background: #f9f8f3; }
.hb { flex: none; width: 22px; display: flex; align-items: center; justify-content: center; background: #f6f3e4; border-right: 1px solid #b5b08f; }
.hb-r { width: 21px; border-right: 0; border-left: 1px solid #b5b08f; }
.hs-thumb { flex: none; width: 1747px; background: linear-gradient(#f6f3de, #f2eed6 60%, #e4dfbe); border-right: 1px solid #b5b08f; }
.hs-track { flex: 1; }
.corner { grid-column: 2; grid-row: 2; border-left: 1px solid #b5b08f; border-top: 1px solid #b5b08f; background: #fdf9ee; }

/* tabs and status */
.tabs { height: 23px; flex: none; display: flex; padding-top: 1px; background: #f4f1dc; border-top: 1px solid #e4e0cc; border-bottom: 1px solid #e0dcc6; font-size: 11.500px; letter-spacing: -.3px; }
.tab { height: 20px; display: flex; align-items: center; gap: 1px; border: 1px solid #a8a8a0; color: #2c3040; }
.tab-desk { width: 172px; padding-left: 2px; background: #b2b2b2; }
.tab-rep { width: 174px; padding-left: 5px; background: #b4cce4; }
.status { height: 20px; flex: none; display: flex; gap: 5px; padding: 1px 0; color: #4a4530; letter-spacing: -.2px; font-size: 11.500px; }
.status span { border: 1px solid #e6e2cc; line-height: 16px; }
.st-main { width: 1848px; padding-left: 3px; }
.st-cap { width: 29px; color: #a49c74; text-align: center; }
.st-num { width: 33px; text-align: center; }

/* taskbar */
.taskbar {
  height: 40px; flex: none; display: flex; align-items: center;
  border-top: 1px solid #123a63;
  background:
    linear-gradient(60deg, transparent 69.500%, rgba(190,230,250,.6) 70.500%, rgba(190,230,250,.3) 72%, transparent 73%),
    linear-gradient(90deg, #3c93cb 0, #3a8cc6 35%, #2a75b4 60%, #215f9f 80%, #174c86 100%);
}
.orb { flex: none; width: 54px; height: 38px; display: flex; justify-content: center; margin-right: 8px; }
.tk { flex: none; height: 38px; display: flex; align-items: center; justify-content: center; }
.tk-plain { width: 58px; margin-right: 3px; }
.tk-mon { width: 54px; }
.tk-c { width: 65px; margin-right: 0; }
.tk-btn { width: 59px; margin-right: 3px; border: 1px solid rgba(20,50,80,.7); border-radius: 3px; background: linear-gradient(rgba(255,255,255,.32), rgba(255,255,255,.12) 50%, rgba(255,255,255,.02)); box-shadow: inset 0 0 0 1px rgba(255,255,255,.25); }
.tk-lit { background: linear-gradient(rgba(255,255,255,.6), rgba(255,255,255,.3)); }
.tk-ex { width: 53px; }
.tk-sep { flex: none; width: 6px; height: 38px; border-left: 2px solid rgba(20,50,80,.5); border-right: 2px solid rgba(20,50,80,.5); }
.tray { margin-left: auto; display: flex; align-items: center; color: #fff; height: 38px; }
.tr-up { width: 0; height: 0; border: 4px solid transparent; border-top: 0; border-bottom: 4px solid #fff; margin-right: 13px; }
.flag { width: 16px; height: 11px; display: flex; flex-direction: column; margin-right: 9px; }
.flag i { flex: 1; }
.flag i:nth-child(1) { background: #fff; } .flag i:nth-child(2) { background: #2a3fd0; } .flag i:nth-child(3) { background: #d8202a; }
.tr-ic { margin-right: 8px; }
.tr-ic2 { margin-right: 12px; }
.clock { width: 60px; display: flex; flex-direction: column; align-items: center; font: 12px/17px "Open Sans", "Noto Sans", sans-serif; letter-spacing: -.2px; margin-right: 9px; }
.showd { width: 14px; height: 36px; border: 1px solid rgba(255,255,255,.4); background: linear-gradient(rgba(255,255,255,.4), rgba(255,255,255,.05) 50%); }
```
